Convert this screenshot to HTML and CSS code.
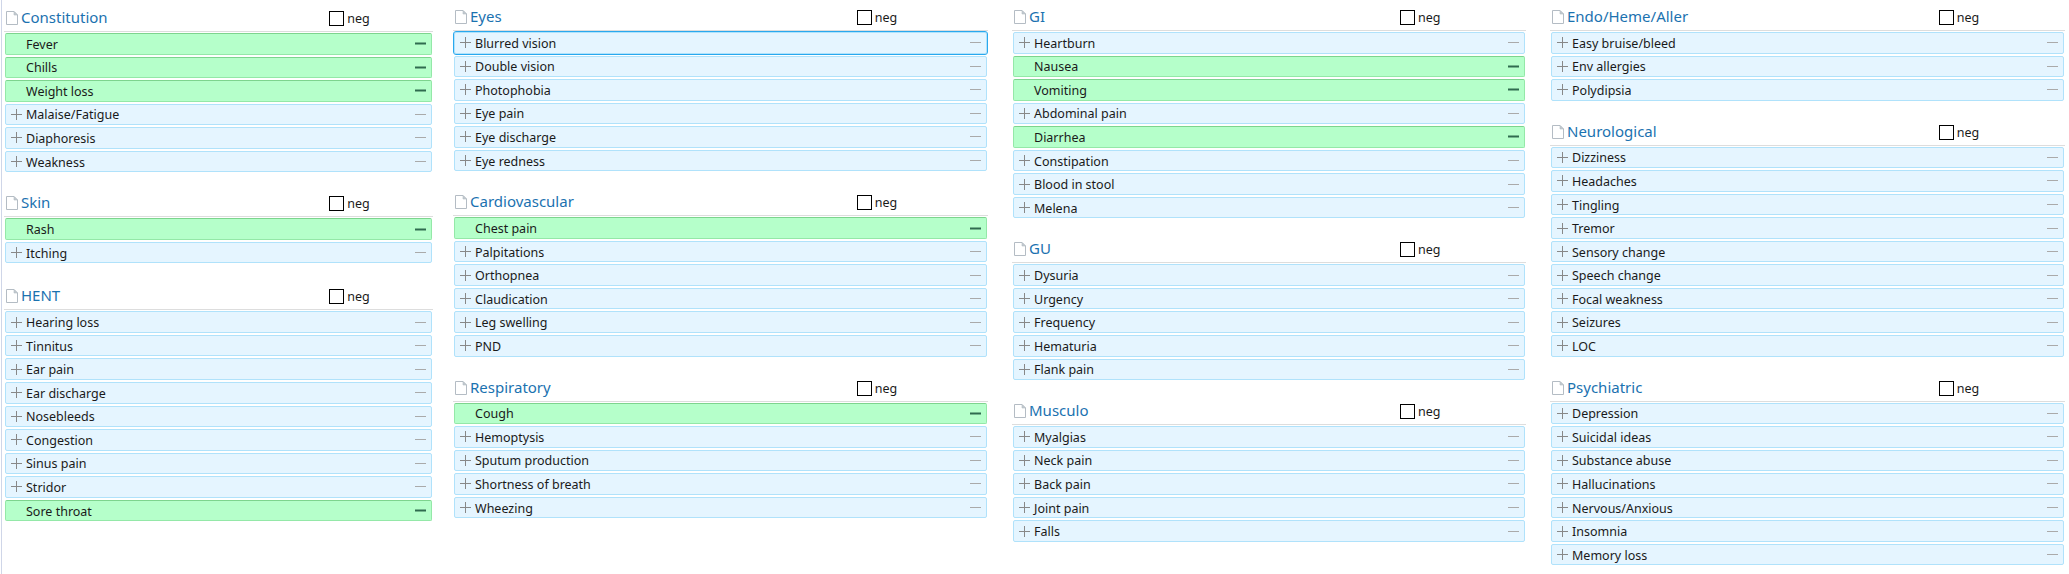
FILE: index.html
```html
<!DOCTYPE html>
<html lang="en">
<head>
  <meta charset="UTF-8">
  <title>Review of Systems</title>
  <link rel="stylesheet" href="styles.css">
</head>
<body>

  <svg class="defs" width="0" height="0">
    <symbol id="doc" viewBox="0 0 12 14">
      <path d="M.5.5h7.5l3.5 3.5v9.500h-11z" fill="#fff" stroke="#b4bcc4"/>
      <path d="M8 .5v3.500h3.500z" fill="#c4cad0" stroke="#b4bcc4" stroke-width=".6"/>
    </symbol>
    <symbol id="plus" viewBox="0 0 11 11">
      <path d="M0 5.500h11M5.500 0v11" stroke="currentColor"/>
    </symbol>
    <symbol id="minus" viewBox="0 0 11 11">
      <path d="M0 5.500h11" stroke="currentColor" stroke-width="var(--minus-w, 1)"/>
    </symbol>
  </svg>

  <div class="page">

    <div class="col col-a">
      <section class="sec">
        <div class="head"><h2 class="title"><svg class="doc"><use href="#doc"/></svg>Constitution</h2><label class="neg"><input type="checkbox">neg</label></div>
        <div class="row on"><svg class="plus"><use href="#plus"/></svg><span class="name">Fever</span><svg class="minus"><use href="#minus"/></svg></div>
        <div class="row on"><svg class="plus"><use href="#plus"/></svg><span class="name">Chills</span><svg class="minus"><use href="#minus"/></svg></div>
        <div class="row on"><svg class="plus"><use href="#plus"/></svg><span class="name">Weight loss</span><svg class="minus"><use href="#minus"/></svg></div>
        <div class="row"><svg class="plus"><use href="#plus"/></svg><span class="name">Malaise/Fatigue</span><svg class="minus"><use href="#minus"/></svg></div>
        <div class="row"><svg class="plus"><use href="#plus"/></svg><span class="name">Diaphoresis</span><svg class="minus"><use href="#minus"/></svg></div>
        <div class="row"><svg class="plus"><use href="#plus"/></svg><span class="name">Weakness</span><svg class="minus"><use href="#minus"/></svg></div>
      </section>
      <section class="sec sec-short">
        <div class="head"><h2 class="title"><svg class="doc"><use href="#doc"/></svg>Skin</h2><label class="neg"><input type="checkbox">neg</label></div>
        <div class="row on"><svg class="plus"><use href="#plus"/></svg><span class="name">Rash</span><svg class="minus"><use href="#minus"/></svg></div>
        <div class="row"><svg class="plus"><use href="#plus"/></svg><span class="name">Itching</span><svg class="minus"><use href="#minus"/></svg></div>
      </section>
      <section class="sec">
        <div class="head"><h2 class="title"><svg class="doc"><use href="#doc"/></svg>HENT</h2><label class="neg"><input type="checkbox">neg</label></div>
        <div class="row"><svg class="plus"><use href="#plus"/></svg><span class="name">Hearing loss</span><svg class="minus"><use href="#minus"/></svg></div>
        <div class="row"><svg class="plus"><use href="#plus"/></svg><span class="name">Tinnitus</span><svg class="minus"><use href="#minus"/></svg></div>
        <div class="row"><svg class="plus"><use href="#plus"/></svg><span class="name">Ear pain</span><svg class="minus"><use href="#minus"/></svg></div>
        <div class="row"><svg class="plus"><use href="#plus"/></svg><span class="name">Ear discharge</span><svg class="minus"><use href="#minus"/></svg></div>
        <div class="row"><svg class="plus"><use href="#plus"/></svg><span class="name">Nosebleeds</span><svg class="minus"><use href="#minus"/></svg></div>
        <div class="row"><svg class="plus"><use href="#plus"/></svg><span class="name">Congestion</span><svg class="minus"><use href="#minus"/></svg></div>
        <div class="row"><svg class="plus"><use href="#plus"/></svg><span class="name">Sinus pain</span><svg class="minus"><use href="#minus"/></svg></div>
        <div class="row"><svg class="plus"><use href="#plus"/></svg><span class="name">Stridor</span><svg class="minus"><use href="#minus"/></svg></div>
        <div class="row on"><svg class="plus"><use href="#plus"/></svg><span class="name">Sore throat</span><svg class="minus"><use href="#minus"/></svg></div>
      </section>
    </div>

    <div class="col col-b">
      <section class="sec">
        <div class="head"><h2 class="title"><svg class="doc"><use href="#doc"/></svg>Eyes</h2><label class="neg"><input type="checkbox">neg</label></div>
        <div class="row focus"><svg class="plus"><use href="#plus"/></svg><span class="name">Blurred vision</span><svg class="minus"><use href="#minus"/></svg></div>
        <div class="row"><svg class="plus"><use href="#plus"/></svg><span class="name">Double vision</span><svg class="minus"><use href="#minus"/></svg></div>
        <div class="row"><svg class="plus"><use href="#plus"/></svg><span class="name">Photophobia</span><svg class="minus"><use href="#minus"/></svg></div>
        <div class="row"><svg class="plus"><use href="#plus"/></svg><span class="name">Eye pain</span><svg class="minus"><use href="#minus"/></svg></div>
        <div class="row"><svg class="plus"><use href="#plus"/></svg><span class="name">Eye discharge</span><svg class="minus"><use href="#minus"/></svg></div>
        <div class="row"><svg class="plus"><use href="#plus"/></svg><span class="name">Eye redness</span><svg class="minus"><use href="#minus"/></svg></div>
      </section>
      <section class="sec">
        <div class="head"><h2 class="title"><svg class="doc"><use href="#doc"/></svg>Cardiovascular</h2><label class="neg"><input type="checkbox">neg</label></div>
        <div class="row on"><svg class="plus"><use href="#plus"/></svg><span class="name">Chest pain</span><svg class="minus"><use href="#minus"/></svg></div>
        <div class="row"><svg class="plus"><use href="#plus"/></svg><span class="name">Palpitations</span><svg class="minus"><use href="#minus"/></svg></div>
        <div class="row"><svg class="plus"><use href="#plus"/></svg><span class="name">Orthopnea</span><svg class="minus"><use href="#minus"/></svg></div>
        <div class="row"><svg class="plus"><use href="#plus"/></svg><span class="name">Claudication</span><svg class="minus"><use href="#minus"/></svg></div>
        <div class="row"><svg class="plus"><use href="#plus"/></svg><span class="name">Leg swelling</span><svg class="minus"><use href="#minus"/></svg></div>
        <div class="row"><svg class="plus"><use href="#plus"/></svg><span class="name">PND</span><svg class="minus"><use href="#minus"/></svg></div>
      </section>
      <section class="sec">
        <div class="head"><h2 class="title"><svg class="doc"><use href="#doc"/></svg>Respiratory</h2><label class="neg"><input type="checkbox">neg</label></div>
        <div class="row on"><svg class="plus"><use href="#plus"/></svg><span class="name">Cough</span><svg class="minus"><use href="#minus"/></svg></div>
        <div class="row"><svg class="plus"><use href="#plus"/></svg><span class="name">Hemoptysis</span><svg class="minus"><use href="#minus"/></svg></div>
        <div class="row"><svg class="plus"><use href="#plus"/></svg><span class="name">Sputum production</span><svg class="minus"><use href="#minus"/></svg></div>
        <div class="row"><svg class="plus"><use href="#plus"/></svg><span class="name">Shortness of breath</span><svg class="minus"><use href="#minus"/></svg></div>
        <div class="row"><svg class="plus"><use href="#plus"/></svg><span class="name">Wheezing</span><svg class="minus"><use href="#minus"/></svg></div>
      </section>
    </div>

    <div class="col col-c">
      <section class="sec">
        <div class="head"><h2 class="title"><svg class="doc"><use href="#doc"/></svg>GI</h2><label class="neg"><input type="checkbox">neg</label></div>
        <div class="row"><svg class="plus"><use href="#plus"/></svg><span class="name">Heartburn</span><svg class="minus"><use href="#minus"/></svg></div>
        <div class="row on"><svg class="plus"><use href="#plus"/></svg><span class="name">Nausea</span><svg class="minus"><use href="#minus"/></svg></div>
        <div class="row on"><svg class="plus"><use href="#plus"/></svg><span class="name">Vomiting</span><svg class="minus"><use href="#minus"/></svg></div>
        <div class="row"><svg class="plus"><use href="#plus"/></svg><span class="name">Abdominal pain</span><svg class="minus"><use href="#minus"/></svg></div>
        <div class="row on"><svg class="plus"><use href="#plus"/></svg><span class="name">Diarrhea</span><svg class="minus"><use href="#minus"/></svg></div>
        <div class="row"><svg class="plus"><use href="#plus"/></svg><span class="name">Constipation</span><svg class="minus"><use href="#minus"/></svg></div>
        <div class="row"><svg class="plus"><use href="#plus"/></svg><span class="name">Blood in stool</span><svg class="minus"><use href="#minus"/></svg></div>
        <div class="row"><svg class="plus"><use href="#plus"/></svg><span class="name">Melena</span><svg class="minus"><use href="#minus"/></svg></div>
      </section>
      <section class="sec">
        <div class="head"><h2 class="title"><svg class="doc"><use href="#doc"/></svg>GU</h2><label class="neg"><input type="checkbox">neg</label></div>
        <div class="row"><svg class="plus"><use href="#plus"/></svg><span class="name">Dysuria</span><svg class="minus"><use href="#minus"/></svg></div>
        <div class="row"><svg class="plus"><use href="#plus"/></svg><span class="name">Urgency</span><svg class="minus"><use href="#minus"/></svg></div>
        <div class="row"><svg class="plus"><use href="#plus"/></svg><span class="name">Frequency</span><svg class="minus"><use href="#minus"/></svg></div>
        <div class="row"><svg class="plus"><use href="#plus"/></svg><span class="name">Hematuria</span><svg class="minus"><use href="#minus"/></svg></div>
        <div class="row"><svg class="plus"><use href="#plus"/></svg><span class="name">Flank pain</span><svg class="minus"><use href="#minus"/></svg></div>
      </section>
      <section class="sec">
        <div class="head"><h2 class="title"><svg class="doc"><use href="#doc"/></svg>Musculo</h2><label class="neg"><input type="checkbox">neg</label></div>
        <div class="row"><svg class="plus"><use href="#plus"/></svg><span class="name">Myalgias</span><svg class="minus"><use href="#minus"/></svg></div>
        <div class="row"><svg class="plus"><use href="#plus"/></svg><span class="name">Neck pain</span><svg class="minus"><use href="#minus"/></svg></div>
        <div class="row"><svg class="plus"><use href="#plus"/></svg><span class="name">Back pain</span><svg class="minus"><use href="#minus"/></svg></div>
        <div class="row"><svg class="plus"><use href="#plus"/></svg><span class="name">Joint pain</span><svg class="minus"><use href="#minus"/></svg></div>
        <div class="row"><svg class="plus"><use href="#plus"/></svg><span class="name">Falls</span><svg class="minus"><use href="#minus"/></svg></div>
      </section>
    </div>

    <div class="col col-d">
      <section class="sec">
        <div class="head"><h2 class="title"><svg class="doc"><use href="#doc"/></svg>Endo/Heme/Aller</h2><label class="neg"><input type="checkbox">neg</label></div>
        <div class="row"><svg class="plus"><use href="#plus"/></svg><span class="name">Easy bruise/bleed</span><svg class="minus"><use href="#minus"/></svg></div>
        <div class="row"><svg class="plus"><use href="#plus"/></svg><span class="name">Env allergies</span><svg class="minus"><use href="#minus"/></svg></div>
        <div class="row"><svg class="plus"><use href="#plus"/></svg><span class="name">Polydipsia</span><svg class="minus"><use href="#minus"/></svg></div>
      </section>
      <section class="sec">
        <div class="head"><h2 class="title"><svg class="doc"><use href="#doc"/></svg>Neurological</h2><label class="neg"><input type="checkbox">neg</label></div>
        <div class="row"><svg class="plus"><use href="#plus"/></svg><span class="name">Dizziness</span><svg class="minus"><use href="#minus"/></svg></div>
        <div class="row"><svg class="plus"><use href="#plus"/></svg><span class="name">Headaches</span><svg class="minus"><use href="#minus"/></svg></div>
        <div class="row"><svg class="plus"><use href="#plus"/></svg><span class="name">Tingling</span><svg class="minus"><use href="#minus"/></svg></div>
        <div class="row"><svg class="plus"><use href="#plus"/></svg><span class="name">Tremor</span><svg class="minus"><use href="#minus"/></svg></div>
        <div class="row"><svg class="plus"><use href="#plus"/></svg><span class="name">Sensory change</span><svg class="minus"><use href="#minus"/></svg></div>
        <div class="row"><svg class="plus"><use href="#plus"/></svg><span class="name">Speech change</span><svg class="minus"><use href="#minus"/></svg></div>
        <div class="row"><svg class="plus"><use href="#plus"/></svg><span class="name">Focal weakness</span><svg class="minus"><use href="#minus"/></svg></div>
        <div class="row"><svg class="plus"><use href="#plus"/></svg><span class="name">Seizures</span><svg class="minus"><use href="#minus"/></svg></div>
        <div class="row"><svg class="plus"><use href="#plus"/></svg><span class="name">LOC</span><svg class="minus"><use href="#minus"/></svg></div>
      </section>
      <section class="sec">
        <div class="head"><h2 class="title"><svg class="doc"><use href="#doc"/></svg>Psychiatric</h2><label class="neg"><input type="checkbox">neg</label></div>
        <div class="row"><svg class="plus"><use href="#plus"/></svg><span class="name">Depression</span><svg class="minus"><use href="#minus"/></svg></div>
        <div class="row"><svg class="plus"><use href="#plus"/></svg><span class="name">Suicidal ideas</span><svg class="minus"><use href="#minus"/></svg></div>
        <div class="row"><svg class="plus"><use href="#plus"/></svg><span class="name">Substance abuse</span><svg class="minus"><use href="#minus"/></svg></div>
        <div class="row"><svg class="plus"><use href="#plus"/></svg><span class="name">Hallucinations</span><svg class="minus"><use href="#minus"/></svg></div>
        <div class="row"><svg class="plus"><use href="#plus"/></svg><span class="name">Nervous/Anxious</span><svg class="minus"><use href="#minus"/></svg></div>
        <div class="row"><svg class="plus"><use href="#plus"/></svg><span class="name">Insomnia</span><svg class="minus"><use href="#minus"/></svg></div>
        <div class="row"><svg class="plus"><use href="#plus"/></svg><span class="name">Memory loss</span><svg class="minus"><use href="#minus"/></svg></div>
      </section>
    </div>

  </div>

</body>
</html>
```

FILE: styles.css
```css
body {
  margin: 0;
  background: #fff;
  color: #1a1a1a;
  font-family: "Noto Sans", sans-serif;
  font-size: 12.5px;
}

.defs {
  display: block;
  height: 0;
}

.page {
  display: flex;
  box-sizing: border-box;
  height: 574px;
  margin-left: 1px;
  padding-left: 2px;
  border-left: 1px solid #cfd6e8;
}

.col {
  flex: none;
}

.col-a {
  width: 429px;
  margin-right: 20px;
  padding-top: 1px;
}

.col-b {
  width: 535px;
  margin-right: 24px;
}

.col-c {
  width: 514px;
  margin-right: 24px;
}

.col-d {
  width: 515px;
}

.sec {
  margin-bottom: 14px;
}

.sec-short {
  margin-bottom: 16px;
}

.head {
  display: flex;
  box-sizing: border-box;
  height: 31px;
  margin-bottom: 1px;
  padding-top: 10px;
  border-bottom: 1px solid #ddd;
}

.title {
  display: flex;
  width: 75%;
  margin: 0;
  color: #1b72b0;
  font-size: 15px;
  font-weight: normal;
  line-height: 13px;
}

.doc {
  flex: none;
  width: 12px;
  height: 14px;
  margin: 0 3px 0 2px;
}

.neg {
  display: flex;
  padding-left: 2.5px;
  font-size: 12.5px;
  line-height: 15px;
}

.col-a .neg {
  padding-left: 3.5px;
}

.neg input {
  appearance: none;
  width: 15px;
  height: 15px;
  margin: 0 3px 0 0;
  border: 1px solid #000;
  background: #fff;
}

.row {
  display: flex;
  align-items: center;
  box-sizing: border-box;
  height: 21.56px;
  margin: 0 1px 2px;
  padding: 0 5px;
  border: 1px solid #b0e2fb;
  border-radius: 2px;
  background: #e5f5ff;
}

.row.focus {
  outline: 1px solid #29a8ee;
}

.row.on {
  border-color: #94e8a8;
  border-top-color: #7dd48e;
  background: #b5ffca;
}

.plus,
.minus {
  flex: none;
  width: 11px;
  height: 11px;
}

.plus {
  color: #888;
}

.minus {
  color: #aaa;
}

.on .plus {
  visibility: hidden;
}

.on .minus {
  --minus-w: 2;
  color: #2f6b4f;
}

.name {
  flex: 1;
  padding: 1px 0 0 4px;
  line-height: 17px;
}
```
